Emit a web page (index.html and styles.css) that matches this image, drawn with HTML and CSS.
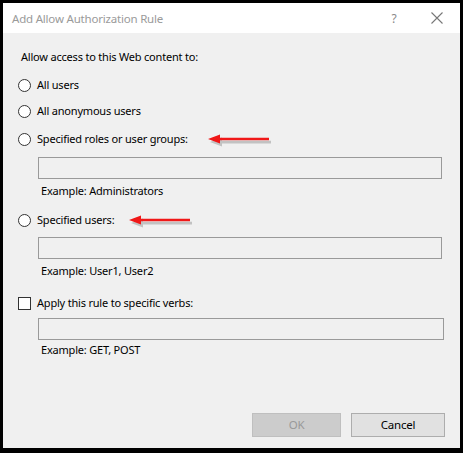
FILE: index.html
```html
<!DOCTYPE html>
<html>
<head>
<meta charset="utf-8">
<link rel="stylesheet" href="styles.css">
</head>
<body>
<div class="dialog">
  <div class="titlebar">
    <span class="title">Add Allow Authorization Rule</span>
    <span class="help">?</span>
    <svg class="close" width="12" height="12" viewBox="0 0 12 12"><path d="M0.5 0.5 L11.5 11.5 M11.5 0.5 L0.5 11.5" stroke="#777" stroke-width="1.1" fill="none"/></svg>
  </div>
  <div class="content">
    <div class="heading">Allow access to this Web content to:</div>
    <div class="row r1"><span class="radio"></span><span class="label">All users</span></div>
    <div class="row r2"><span class="radio"></span><span class="label">All anonymous users</span></div>
    <div class="row r3"><span class="radio"></span><span class="label">Specified roles or user groups:</span>
      <svg class="arrow a1" width="66" height="14" viewBox="0 0 66 14"><g transform="translate(2,3)" fill="#8a8a8a" opacity="0.45"><path d="M0 5 L12 0.5 L12 3.8 L61 3.8 L61 6.6 L12 6.6 L12 9.5 Z"/></g><path d="M0 5 L12 0.5 L12 3.8 L61 3.8 L61 6.2 L12 6.2 L12 9.5 Z" fill="#f01818"/></svg>
    </div>
    <div class="field f1"></div>
    <div class="example e1">Example: Administrators</div>
    <div class="row r4"><span class="radio"></span><span class="label">Specified users:</span>
      <svg class="arrow a2" width="66" height="14" viewBox="0 0 66 14"><g transform="translate(2,3)" fill="#8a8a8a" opacity="0.45"><path d="M0 5 L12 0.5 L12 3.8 L61 3.8 L61 6.6 L12 6.6 L12 9.5 Z"/></g><path d="M0 5 L12 0.5 L12 3.8 L61 3.8 L61 6.2 L12 6.2 L12 9.5 Z" fill="#f01818"/></svg>
    </div>
    <div class="field f2"></div>
    <div class="example e2">Example: User1, User2</div>
    <div class="row r5"><span class="check"></span><span class="label">Apply this rule to specific verbs:</span></div>
    <div class="field f3"></div>
    <div class="example e3">Example: GET, POST</div>
    <div class="buttons">
      <div class="btn ok">OK</div>
      <div class="btn cancel">Cancel</div>
    </div>
  </div>
</div>
</body>
</html>
```
FILE: styles.css
```css
html, body {
  margin: 0;
  padding: 0;
  background: #000;
}
body {
  width: 463px;
  height: 453px;
  overflow: hidden;
  font-family: "Noto Sans", "Liberation Sans", sans-serif;
  font-size: 11px;
  letter-spacing: -0.2px;
  color: #000;
}
.dialog {
  margin: 3px 3px 5px 3px;
  width: 457px;
  height: 445px;
  background: #f0f0f0;
  display: flex;
  flex-direction: column;
}
.titlebar {
  height: 30px;
  background: #fff;
  display: flex;
  align-items: center;
  padding: 0 0 0 9px;
  box-sizing: border-box;
  flex-shrink: 0;
}
.title {
  color: #9a9a9a;
  flex: 1;
  font-size: 11.5px;
}
.help {
  color: #8a8a8a;
  width: 20px;
  text-align: center;
  margin-right: 27px;
  font-size: 12px;
}
.close {
  margin-right: 17px;
}
.content {
  flex: 1;
  display: flex;
  flex-direction: column;
  padding: 0 0 0 15px;
}
.heading {
  line-height: 16px;
  height: 16px;
  margin-top: 16px;
  padding-left: 3px;
}
.row {
  height: 20px;
  display: flex;
  align-items: center;
}
.r1 { margin-top: 10px; }
.r2 { margin-top: 6px; }
.r3 { margin-top: 8px; }
.r4 { margin-top: 11px; }
.r5 { margin-top: 14px; }
.radio {
  width: 11px;
  height: 11px;
  border: 1px solid #333;
  border-radius: 50%;
  background: #fff;
  flex-shrink: 0;
}
.check {
  width: 11px;
  height: 11px;
  border: 1px solid #333;
  background: #fff;
  flex-shrink: 0;
}
.label {
  margin-left: 6px;
  line-height: 16px;
}
.arrow {
  margin-left: 20px;
  margin-top: 3px;
}
.a2 { margin-left: 15px; }
.field {
  margin-left: 20px;
  width: 402px;
  height: 20px;
  border: 1px solid #9a9a9a;
  background: #f0f0f0;
  flex-shrink: 0;
}
.f1 { margin-top: 8px; }
.f2 { margin-top: 7px; }
.f3 { margin-top: 5px; width: 404px; }
.example {
  margin-left: 23px;
  line-height: 16px;
  height: 16px;
}
.e1 { margin-top: 4px; }
.e2 { margin-top: 4px; }
.e3 { margin-top: 2px; }
.buttons {
  margin-top: auto;
  margin-bottom: 11px;
  display: flex;
  gap: 10px;
  padding-left: 234px;
}
.btn {
  height: 22px;
  line-height: 22px;
  text-align: center;
  box-sizing: content-box;
  font-size: 11.5px;
}
.ok {
  width: 87px;
  background: #cccccc;
  border: 1px solid #bfbfbf;
  color: #999;
}
.cancel {
  width: 92px;
  background: #e1e1e1;
  border: 1px solid #adadad;
}
```
